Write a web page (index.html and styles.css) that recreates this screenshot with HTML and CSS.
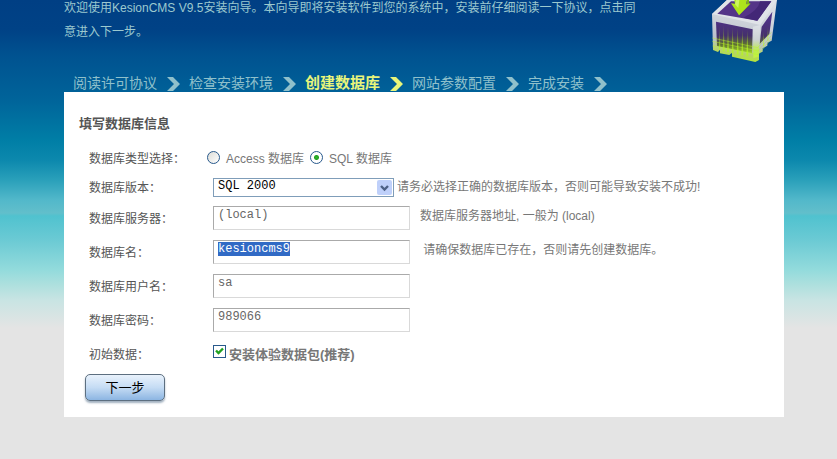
FILE: index.html
```html
<!DOCTYPE html>
<html lang="zh-CN">
<head>
    <meta charset="UTF-8">
    <meta name="viewport" content="width=device-width, initial-scale=1.0">
    <title>KesionCMS V9.5 安装向导</title>
    <link rel="stylesheet" href="styles.css">
</head>
<body>

<div class="page">
    <header class="header">
        <p class="intro">欢迎使用KesionCMS V9.5安装向导。本向导即将安装软件到您的系统中，安装前仔细阅读一下协议，点击同意进入下一步。</p>
        <svg class="logo" viewBox="63 0 201 189" aria-hidden="true">
            <defs>
                <linearGradient id="frame" gradientUnits="userSpaceOnUse" x1="0" y1="0" x2="-30" y2="186">
                    <stop offset="0" stop-color="#d9dce2"/>
                    <stop offset=".55" stop-color="#b9c0cb"/>
                    <stop offset=".72" stop-color="#b5d463"/>
                    <stop offset=".85" stop-color="#b4f022"/>
                    <stop offset="1" stop-color="#c4f53a"/>
                </linearGradient>
                <linearGradient id="side" gradientUnits="userSpaceOnUse" x1="0" y1="60" x2="0" y2="165">
                    <stop offset="0" stop-color="#4e3185"/>
                    <stop offset=".45" stop-color="#45306c"/>
                    <stop offset=".7" stop-color="#5f6f35"/>
                    <stop offset="1" stop-color="#b0ea25"/>
                </linearGradient>
                <linearGradient id="ray" x1="0" y1="0" x2="0" y2="1">
                    <stop offset="0" stop-color="#b5f520" stop-opacity=".1"/>
                    <stop offset="1" stop-color="#b5f520" stop-opacity=".9"/>
                </linearGradient>
                <linearGradient id="edge" gradientUnits="userSpaceOnUse" x1="0" y1="70" x2="0" y2="180">
                    <stop offset="0" stop-color="#dfe2e8"/>
                    <stop offset=".45" stop-color="#ccd2d4"/>
                    <stop offset=".75" stop-color="#bdec4c"/>
                    <stop offset="1" stop-color="#c4f53a"/>
                </linearGradient>
            </defs>
            <path fill="url(#frame)" d="M66 42L111 0H261L245 122L232 128V137L218 145V155L207 160V180L196 186L126 170V158L118 165L90 160V149L84 156L69 150Z"/>
            <path fill="#e0e3e8" d="M66 42L111 0H261L211 75Z"/>
            <path fill="#543488" d="M82 41L123 4H244L202 62Z"/>
            <path fill="#432777" d="M160 53Q205 32 210 4H244L202 62Z"/>
            <path fill="url(#side)" d="M78 65L188 88L186 160L81 138Z"/>
            <path fill="url(#side)" d="M215 80L247 35L238 102L209 132Z"/>
            <path fill="url(#ray)" d="M89 78L91 149H87ZM101 74L104 154H98ZM114 77L117 156H111ZM128 80L131 160H125ZM143 84L146 163H140ZM157 87L160 166H154ZM172 90L175 169H169ZM221 95L223 139H219ZM234 80L236 122H231Z"/>
            <path fill="url(#edge)" d="M189 80L211 75L206 170L190 174Z"/>
            <path fill="none" stroke="#b9f526" stroke-opacity=".7" stroke-width="2" d="M67 114L203 143L244 97M67 124L204 153L244 107M68 138L205 164L244 116"/>
            <path fill="#7fb31a" d="M169 0H177V8L182 11L147 46L151 38L170 13Z"/>
            <path fill="#aee51c" d="M133 0H169V13H179L147 46L123 10L135 11Z"/>
            <path fill="#cdf560" d="M138 0H148L145 24L135 13Z"/>
        </svg>
    </header>

    <ol class="steps">
        <li>阅读许可协议<svg viewBox="0 0 13 14"><path d="M0 0H6L13 7L6 14H0L7 7Z"/></svg></li>
        <li>检查安装环境<svg viewBox="0 0 13 14"><path d="M0 0H6L13 7L6 14H0L7 7Z"/></svg></li>
        <li class="current">创建数据库<svg viewBox="0 0 13 14"><path d="M0 0H6L13 7L6 14H0L7 7Z"/></svg></li>
        <li>网站参数配置<svg viewBox="0 0 13 14"><path d="M0 0H6L13 7L6 14H0L7 7Z"/></svg></li>
        <li>完成安装<svg viewBox="0 0 13 14"><path d="M0 0H6L13 7L6 14H0L7 7Z"/></svg></li>
    </ol>

    <form class="panel">
        <h2>填写数据库信息</h2>
        <div class="row row-type" role="radiogroup" aria-labelledby="type-name">
            <span class="name" id="type-name">数据库类型选择：</span>
            <div class="field">
                <input type="radio" name="dbtype" id="access">
                <label for="access">Access 数据库</label>
                <input type="radio" name="dbtype" id="sql" checked>
                <label for="sql">SQL 数据库</label>
            </div>
        </div>
        <div class="row row-version">
            <label class="name" for="version">数据库版本：</label>
            <div class="field">
                <select id="version">
                    <option>SQL 2000</option>
                </select>
                <span class="hint-version">请务必选择正确的数据库版本，否则可能导致安装不成功!</span>
            </div>
        </div>
        <div class="row">
            <label class="name" for="server">数据库服务器：</label>
            <div class="field">
                <input type="text" id="server" value="(local)">
                <span class="hint">数据库服务器地址, 一般为 (local)</span>
            </div>
        </div>
        <div class="row">
            <label class="name" for="dbname">数据库名：</label>
            <div class="field">
                <input type="text" id="dbname" value="kesioncms9">
                <span class="hint">&nbsp;请确保数据库已存在，否则请先创建数据库。</span>
            </div>
        </div>
        <div class="row">
            <label class="name" for="user">数据库用户名：</label>
            <div class="field"><input type="text" id="user" value="sa"></div>
        </div>
        <div class="row">
            <label class="name" for="password">数据库密码：</label>
            <div class="field"><input type="text" id="password" value="989066"></div>
        </div>
        <div class="row">
            <span class="name">初始数据：</span>
            <div class="field field-check">
                <input type="checkbox" id="demo" checked>
                <label for="demo">安装体验数据包(推荐)</label>
            </div>
        </div>
        <button type="button" class="next">下一步</button>
    </form>
</div>

<script>
    const dbname = document.getElementById('dbname');
    dbname.focus();
    dbname.select();
</script>

</body>
</html>
```
FILE: styles.css
```css
* {
    box-sizing: border-box;
}
body {
    margin: 0;
    font-family: "Liberation Sans", "Noto Sans CJK SC", sans-serif;
    font-size: 12px;
    color: #777;
    background: #e4e4e4 linear-gradient(to bottom,
        #003f84 0, #004286 30px, #005290 55px, #00649a 100px,
        #007ea6 140px, #0c88ad 160px, #2aa0ba 180px, #52b8ca 200px,
        #62bfcb 213px, #50c2cf 216px, #6bcad4 240px, #93dbdc 270px,
        #aee0de 285px, #c8e4e3 300px, #e4e4e4 328px) no-repeat;
    background-size: 100% 328px;
}
.page {
    padding: 0 53px 42px 64px;
}
.header {
    display: flex;
    justify-content: space-between;
    align-items: flex-start;
    height: 74px;
    padding-right: 6px;
}
.intro {
    flex: 0 1 576px;
    margin: -4px 0 0;
    line-height: 24px;
    color: #9cc9cf;
}
.logo {
    width: 67px;
    height: 63px;
}
.steps {
    display: flex;
    gap: 9px;
    margin: 0;
    padding: 0 9px;
    list-style: none;
    font-size: 14px;
    line-height: 18px;
    color: #8fc0cb;
}
.steps li {
    display: flex;
    align-items: center;
    gap: 10px;
    white-space: nowrap;
}
.steps svg {
    width: 13px;
    height: 14px;
    margin-top: 2px;
    fill: currentColor;
}
.steps .current {
    font-size: 15px;
    font-weight: bold;
    color: #e8f57a;
}
.panel {
    padding: 22px 15px 16px;
    background: #fff;
}
.panel h2 {
    margin: 0 0 9px;
    font-size: 13px;
    line-height: 20px;
    color: #555;
}
.row {
    display: grid;
    grid-template-columns: 124px 1fr;
    align-items: center;
    height: 34px;
    padding-left: 10px;
}
.row-type {
    grid-template-columns: 118px 1fr;
    height: 30px;
}
.row-version {
    height: 28px;
}
.name {
    padding-bottom: 2px;
    color: #555;
}
.field {
    display: flex;
    align-items: center;
}
.hint {
    margin-left: 10px;
    padding-bottom: 8px;
}
.hint-version {
    margin-left: 3px;
    padding-bottom: 4px;
}
input[type="text"] {
    width: 197px;
    height: 24px;
    padding: 0 4px 6px;
    border: 1px solid #d9d9d9;
    border-top-color: #aaa;
    border-left-color: #aaa;
    font: 12px "Liberation Mono", monospace;
    color: #666;
    background: #fff;
    outline: none;
}
input::selection {
    color: #fff;
    background: #316ac5;
}
select {
    appearance: none;
    width: 181px;
    height: 19px;
    padding: 0 20px 2px 4px;
    border: 1px solid #7f9db9;
    border-radius: 0;
    font: 12px "Liberation Mono", monospace;
    color: #000;
    background: #fff url("data:image/svg+xml,%3Csvg xmlns='http://www.w3.org/2000/svg' width='15' height='15'%3E%3Crect width='15' height='15' rx='2' fill='%23bfd0fa'/%3E%3Cpath d='M4 6l3.500 3.500L11 6' fill='none' stroke='%234d6185' stroke-width='2.400'/%3E%3C/svg%3E") no-repeat right 1px center;
}
input[type="radio"],
input[type="checkbox"] {
    appearance: none;
    flex: none;
    width: 13px;
    height: 13px;
    margin: 0 6px 2px 0;
    border: 1px solid #28598c;
    background: linear-gradient(135deg, #dcdcd7, #fff);
}
input[type="radio"] {
    border-radius: 50%;
}
input[type="radio"]:checked {
    background: radial-gradient(circle, #35b52d 0, #20a120 2px, #fff 3px);
}
.row-type label {
    margin-right: 6px;
    padding-bottom: 2px;
}
.field-check {
    padding-bottom: 2px;
    font-size: 13px;
    font-weight: bold;
}
input[type="checkbox"] {
    margin: 0 3px 3px 0;
}
input[type="checkbox"]:checked {
    background: #fff url("data:image/svg+xml,%3Csvg xmlns='http://www.w3.org/2000/svg' width='11' height='11'%3E%3Cpath d='M2 4.500l2.500 2.500L9 2.500' fill='none' stroke='%2321a121' stroke-width='2.400'/%3E%3C/svg%3E") center no-repeat;
}
.next {
    display: block;
    width: 80px;
    height: 27px;
    margin: 3px 0 0 6px;
    padding: 0 0 2px;
    border: 1px solid #5d6f80;
    border-radius: 5px;
    font: 13px "Noto Sans CJK SC", sans-serif;
    line-height: 20px;
    color: #000;
    background: linear-gradient(#e9f2fc, #c5dcf4 50%, #8cb5e2);
    box-shadow: 0 2px 2px rgba(70, 100, 130, 0.5);
}
```
